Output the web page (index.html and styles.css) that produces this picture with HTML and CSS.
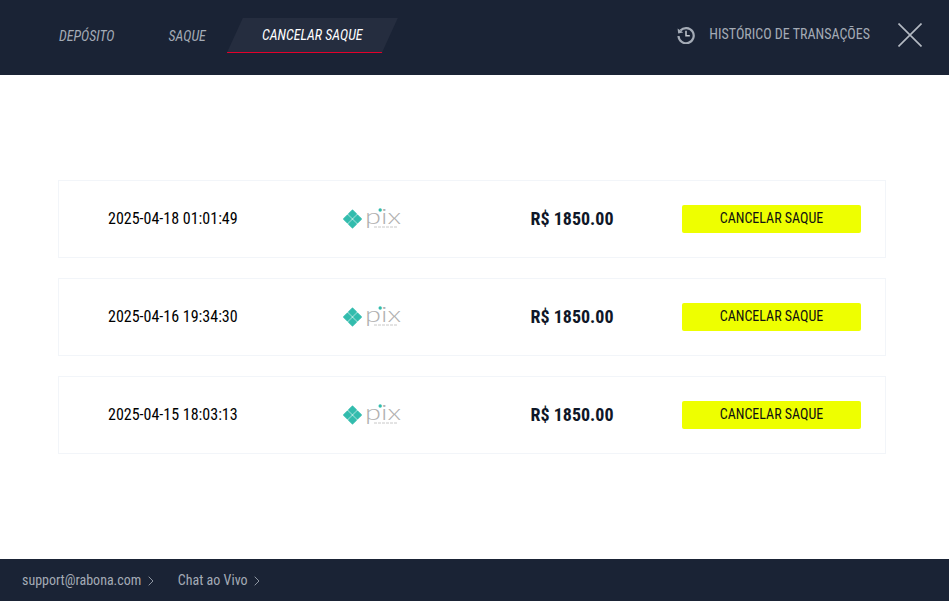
FILE: index.html
```html
<!DOCTYPE html>
<html lang="pt-BR">
<head>
<meta charset="utf-8">
<title>Cancelar Saque</title>
<link rel="stylesheet" href="styles.css">
</head>
<body>
<div class="page">
  <header class="header">
    <nav class="tabs">
      <a class="tab">DEPÓSITO</a>
      <a class="tab tab-saque">SAQUE</a>
      <a class="tab tab-active"><span class="tab-label">CANCELAR SAQUE</span></a>
    </nav>
    <div class="header-right">
      <a class="history">
        <svg class="history-icon" width="18" height="18" viewBox="0 0 18 18" aria-hidden="true">
          <path d="M3.4 4.6A7.6 7.6 0 1 1 1.5 10" fill="none" stroke="#a4abb6" stroke-width="2.2"/>
          <path d="M0.6 2.4L1.2 7.4L6.2 6.6Z" fill="#a4abb6"/>
          <path d="M9 4.8V9.8H12.8" fill="none" stroke="#c4c9d0" stroke-width="1.5"/>
        </svg>
        <span class="history-label">HISTÓRICO DE TRANSAÇÕES</span>
      </a>
      <svg class="close" width="24" height="24" viewBox="0 0 24 24" aria-hidden="true">
        <path d="M0.5 0.5L23.5 23.5M23.5 0.5L0.5 23.5" stroke="#b4bac3" stroke-width="1.6" fill="none"/>
      </svg>
    </div>
  </header>

  <main class="main">
    <section class="list">
      <article class="row">
        <div class="date">2025-04-18 01:01:49</div>
        <div class="logo">
          <svg class="pix" width="60" height="20" viewBox="0 0 60 20" aria-hidden="true">
            <g class="pix-mark">
              <path d="M9.5 1.2L13.3 5L9.5 8.8L5.7 5Z"/>
              <path d="M9.5 11.2L13.3 15L9.5 18.8L5.7 15Z"/>
              <path d="M0.7 10L4.5 6.2L8.3 10L4.5 13.8Z"/>
              <path d="M10.7 10L14.5 6.2L18.3 10L14.5 13.8Z"/>
            </g>
            <text x="22" y="15" textLength="36" lengthAdjust="spacingAndGlyphs" class="pix-word">pix</text>
            <circle cx="37.2" cy="1" r="1.7" class="pix-dot"/>
            <path d="M31 18H55" class="pix-sub"/>
          </svg>
        </div>
        <div class="amount">R$ 1850.00</div>
        <button class="cancel" type="button">CANCELAR SAQUE</button>
      </article>
      <article class="row">
        <div class="date">2025-04-16 19:34:30</div>
        <div class="logo">
          <svg class="pix" width="60" height="20" viewBox="0 0 60 20" aria-hidden="true">
            <g class="pix-mark">
              <path d="M9.5 1.2L13.3 5L9.5 8.8L5.7 5Z"/>
              <path d="M9.5 11.2L13.3 15L9.5 18.8L5.7 15Z"/>
              <path d="M0.7 10L4.5 6.2L8.3 10L4.5 13.8Z"/>
              <path d="M10.7 10L14.5 6.2L18.3 10L14.5 13.8Z"/>
            </g>
            <text x="22" y="15" textLength="36" lengthAdjust="spacingAndGlyphs" class="pix-word">pix</text>
            <circle cx="37.2" cy="1" r="1.7" class="pix-dot"/>
            <path d="M31 18H55" class="pix-sub"/>
          </svg>
        </div>
        <div class="amount">R$ 1850.00</div>
        <button class="cancel" type="button">CANCELAR SAQUE</button>
      </article>
      <article class="row">
        <div class="date">2025-04-15 18:03:13</div>
        <div class="logo">
          <svg class="pix" width="60" height="20" viewBox="0 0 60 20" aria-hidden="true">
            <g class="pix-mark">
              <path d="M9.5 1.2L13.3 5L9.5 8.8L5.7 5Z"/>
              <path d="M9.5 11.2L13.3 15L9.5 18.8L5.7 15Z"/>
              <path d="M0.7 10L4.5 6.2L8.3 10L4.5 13.8Z"/>
              <path d="M10.7 10L14.5 6.2L18.3 10L14.5 13.8Z"/>
            </g>
            <text x="22" y="15" textLength="36" lengthAdjust="spacingAndGlyphs" class="pix-word">pix</text>
            <circle cx="37.2" cy="1" r="1.7" class="pix-dot"/>
            <path d="M31 18H55" class="pix-sub"/>
          </svg>
        </div>
        <div class="amount">R$ 1850.00</div>
        <button class="cancel" type="button">CANCELAR SAQUE</button>
      </article>
    </section>
  </main>

  <footer class="footer">
    <a class="foot-link">support@rabona.com
      <svg class="chev" width="6" height="10" viewBox="0 0 6 10" aria-hidden="true"><path d="M0.7 0.7L5 5L0.7 9.3" fill="none" stroke="#8f97a3" stroke-width="1"/></svg>
    </a>
    <a class="foot-link">Chat ao Vivo
      <svg class="chev" width="6" height="10" viewBox="0 0 6 10" aria-hidden="true"><path d="M0.7 0.7L5 5L0.7 9.3" fill="none" stroke="#8f97a3" stroke-width="1"/></svg>
    </a>
  </footer>
</div>
</body>
</html>
```

FILE: styles.css
```css
* { box-sizing: border-box; }
html, body { margin: 0; padding: 0; height: 100%; }
body {
  font-family: Roboto, "Liberation Sans", sans-serif;
  font-stretch: 75%;
  background: #fff;
  overflow: hidden;
}
.page {
  display: flex;
  flex-direction: column;
  height: 601px;
}
.header {
  height: 75px;
  flex: none;
  background: #1a2335;
  display: flex;
  align-items: center;
  justify-content: space-between;
  padding: 18px 27px 22px 59px;
}
.tabs {
  display: flex;
  align-items: center;
}
.tab {
  font-size: 14px;
  font-style: italic;
  color: #a4abb6;
}
.tab-saque { margin-left: 54px; }
.tab-active {
  margin-left: 21px;
  position: relative;
  width: 171px;
  height: 35px;
  display: flex;
  align-items: center;
  justify-content: center;
  color: #fff;
  background: #252d3f;
  clip-path: polygon(16px 0, 100% 0, 155px 100%, 0 100%);
  border-bottom: 1px solid #e4002b;
}
.tab-label { display: block; margin-bottom: 1px; }
.header-right {
  display: flex;
  align-items: center;
  margin-bottom: 1px;
}
.history {
  display: flex;
  align-items: center;
  gap: 14px;
  font-size: 14px;
  color: #a4abb6;
}
.history-label { margin-bottom: 2px; }
.close { margin-left: 28px; }
.main {
  flex: 1;
  padding: 105px 63px 0 58px;
}
.list {
  display: flex;
  flex-direction: column;
  gap: 20px;
}
.row {
  height: 78px;
  border: 1px solid #f2f5f9;
  display: flex;
  align-items: center;
  padding-left: 49px;
}
.date {
  width: 235px;
  font-size: 16px;
  color: #000;
  margin-bottom: 2px;
}
.logo {
  width: 187.5px;
  display: flex;
  align-items: center;
}
.pix { overflow: visible; }
.pix-mark path {
  fill: #32bcad;
  stroke: #32bcad;
  stroke-width: 1.2;
  stroke-linejoin: round;
}
.pix-word {
  font-family: Lato, sans-serif;
  font-weight: 300;
  font-size: 22px;
  fill: #b0b0b0;
  font-stretch: 100%;
}
.pix-dot { fill: #32bcad; }
.pix-sub {
  stroke: #c8c8c8;
  stroke-width: 1;
  stroke-dasharray: 3 1;
  fill: none;
}
.amount {
  width: 151.5px;
  font-size: 18px;
  font-weight: 700;
  color: #0f1728;
  margin-bottom: 1px;
}
.cancel {
  width: 179px;
  height: 28px;
  border: 0;
  border-radius: 2px;
  background: #eeff00;
  font: inherit;
  font-stretch: 75%;
  font-size: 14px;
  color: #111;
  padding: 0 0 2px;
}
.footer {
  height: 42px;
  flex: none;
  background: #1a2335;
  display: flex;
  align-items: center;
  gap: 24px;
  padding-left: 22px;
}
.foot-link {
  display: flex;
  align-items: center;
  gap: 6.5px;
  font-size: 14px;
  color: #a4abb6;
}
.chev { margin-top: 1px; }
```
